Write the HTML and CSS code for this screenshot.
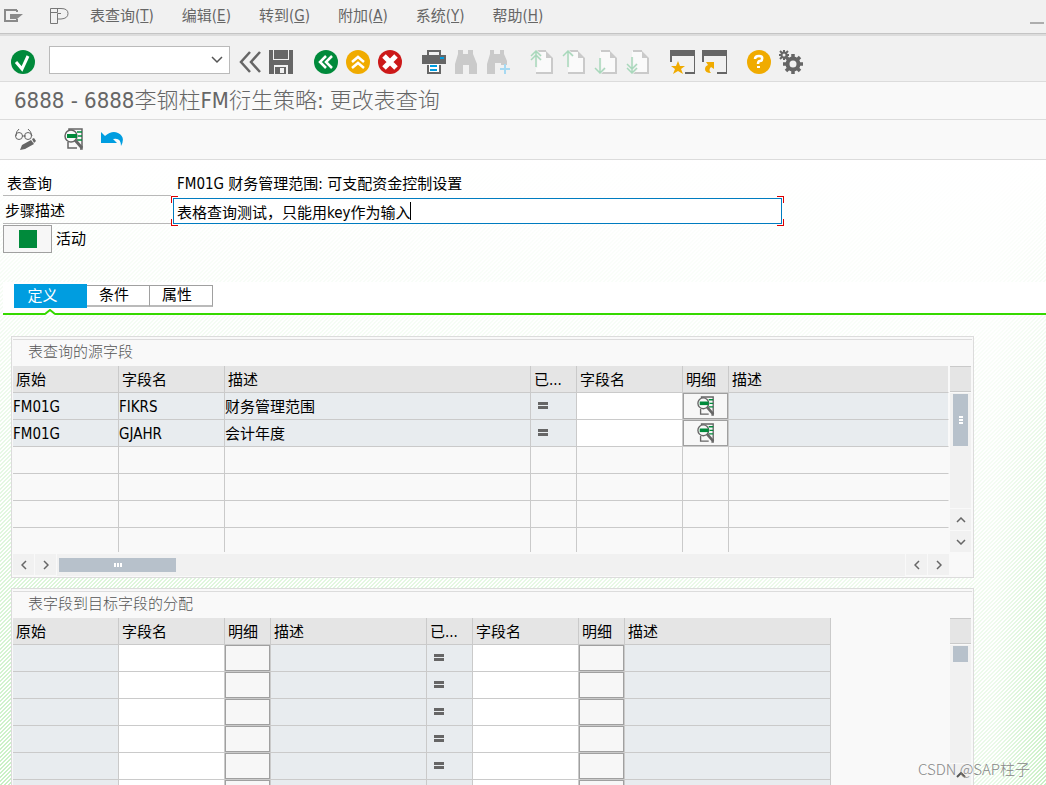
FILE: index.html
```html
<!DOCTYPE html>
<html lang="zh-CN">
<head>
<meta charset="utf-8">
<title>更改表查询</title>
<link rel="stylesheet" href="styles.css">
</head>
<body>
<svg class="sprite" aria-hidden="true">
  <symbol id="i-detail" viewBox="0 0 20 22">
    <path d="M5 2V1h13v20h-2M4 14v6h9" fill="none" stroke="#666" stroke-width="1.5"/>
    <path d="M13 4h5M14 8h4M13 12h5" stroke="#008a3b" stroke-width="1.5"/>
    <circle cx="7" cy="8" r="6" fill="#f9f9f9" stroke="#666" stroke-width="1.5"/>
    <path d="M3 6h10v4H3z" fill="#008a3b"/>
    <path d="M11 12l7 8" stroke="#666" stroke-width="3" fill="none"/>
  </symbol>
  <symbol id="i-doc" viewBox="0 0 24 24">
    <path d="M6 1h10l7 7v15H6z" fill="#fafafa"/>
    <path d="M7 1h9M22 8v15M6 23h17" stroke="#cacaca" stroke-width="2" fill="none"/>
    <path d="M16 1l7 7h-7z" fill="#cacaca"/>
  </symbol>
  <symbol id="i-win" viewBox="0 0 25 24">
    <path d="M0 0h25v24h-10v-2h9V6H2v6H0z" fill="#666"/>
  </symbol>
</svg>

<nav class="menubar">
  <button class="menu-icon" aria-label="菜单"><svg width="20" height="14" viewBox="0 0 20 14"><path d="M13 1H1v11h12M13 1v2M13 10v3" fill="none" stroke="#8a8a8a" stroke-width="2"/><path d="M6 5h13l-6 5H6z" fill="#8a8a8a"/></svg></button>
  <button class="menu-icon menu-p" aria-label="P"><svg width="20" height="18" viewBox="0 0 20 18"><path d="M.5 1.500H11q7 0 7 5t-7 5.500H7.500v4.500H.5zM7.500 1.500v4H.5M7.500 12V6.500H11" fill="none" stroke="#777"/></svg></button>
  <button>表查询(<u>T</u>)</button>
  <button>编辑(<u>E</u>)</button>
  <button>转到(<u>G</u>)</button>
  <button>附加(<u>A</u>)</button>
  <button>系统(<u>Y</u>)</button>
  <button>帮助(<u>H</u>)</button>
  <button class="minimize" aria-label="最小化"></button>
</nav>

<div class="toolbar">
  <button aria-label="回车"><svg width="24" height="24"><circle cx="12" cy="12" r="12" fill="#008a3b"/><path d="M5 12l6 7 6-13" fill="none" stroke="#fff" stroke-width="3"/></svg></button>
  <div class="command">
    <select aria-label="命令"><option></option></select>
    <svg width="12" height="8" viewBox="0 0 12 8"><path d="M1 1l5 5 5-5" fill="none" stroke="#555" stroke-width="1.5"/></svg>
  </div>
  <div class="group first">
    <button aria-label="收起"><svg width="24" height="24"><path d="M12 2L3 12l9 10M22 2l-9 10 9 10" fill="none" stroke="#666" stroke-width="2.5"/></svg></button>
    <button aria-label="保存"><svg width="24" height="24"><path d="M0 0h24v24H0z" fill="#666"/><path d="M4 0h1v9h14V0h1v10H4zM5 15h14v9H5z" fill="#f1f1f1"/><path d="M6 17h11v7H6z" fill="#666"/><path d="M11 18h4v5h-4z" fill="#f1f1f1"/></svg></button>
  </div>
  <div class="group">
    <button aria-label="返回"><svg width="24" height="24"><circle cx="12" cy="12" r="12" fill="#008a3b"/><path d="M12 6l-6 6 6 6M18 6l-6 6 6 6" fill="none" stroke="#fff" stroke-width="2.500"/></svg></button>
    <button aria-label="退出"><svg width="24" height="24"><circle cx="12" cy="12" r="12" fill="#f0ab00"/><path d="M6 12l6-5 6 5M6 18l6-5 6 5" fill="none" stroke="#fff" stroke-width="2.500"/></svg></button>
    <button aria-label="取消"><svg width="24" height="24"><circle cx="12" cy="12" r="12" fill="#cc1919"/><path d="M6 6l12 12M18 6L6 18" fill="none" stroke="#fff" stroke-width="5"/></svg></button>
  </div>
  <div class="group">
    <button aria-label="打印"><svg width="24" height="24"><path d="M5 5V0h14v5h5v9H0V5zM7 2v3h10V2zM5 15h14v9H5z" fill="#666" fill-rule="evenodd"/><path d="M7 14h10v8H7z" fill="#fff"/><path d="M8 15h7v2H8zM8 19h7v2H8zM18 7h4v2h-4z" fill="#009de0"/></svg></button>
    <button aria-label="查找"><svg width="24" height="24"><path d="M4 0h5v4h5V0h5v4l4 10v10h-8v-9H9v9H1V14L4 4z" fill="#cacaca"/></svg></button>
    <button aria-label="查找下一个"><svg width="24" height="24"><path d="M4 0h4v4h6V0h4v4l3 7v4h-6v-2H9v11H1V14L4 4z" fill="#cacaca"/><path d="M19 14v10M14 19h10" stroke="#a6d9f2" stroke-width="2"/></svg></button>
  </div>
  <div class="group">
    <button aria-label="首页"><svg width="24" height="24"><use href="#i-doc"/><path d="M6 1v17M1 6l5-5 5 5M1 10l5-5 5 5" fill="none" stroke="#f1f1f1" stroke-width="3"/><path d="M6 1v16M1 6l5-5 5 5M1 10l5-5 5 5" fill="none" stroke="#a8d8bb" stroke-width="1.500"/></svg></button>
    <button aria-label="上一页"><svg width="24" height="24"><use href="#i-doc"/><path d="M6 1v17M1 6l5-5 5 5" fill="none" stroke="#f1f1f1" stroke-width="3"/><path d="M6 1v16M1 6l5-5 5 5" fill="none" stroke="#a8d8bb" stroke-width="1.500"/></svg></button>
    <button aria-label="下一页"><svg width="24" height="24"><use href="#i-doc"/><path d="M6 8v15M1 18l5 5 5-5" fill="none" stroke="#f1f1f1" stroke-width="3"/><path d="M6 8v15M1 18l5 5 5-5" fill="none" stroke="#a8d8bb" stroke-width="1.500"/></svg></button>
    <button aria-label="末页"><svg width="24" height="24"><use href="#i-doc"/><path d="M6 7v16M1 18l5 5 5-5M1 14l5 5 5-5" fill="none" stroke="#f1f1f1" stroke-width="3"/><path d="M6 7v16M1 18l5 5 5-5M1 14l5 5 5-5" fill="none" stroke="#a8d8bb" stroke-width="1.500"/></svg></button>
  </div>
  <div class="group wins">
    <button aria-label="新建会话"><svg width="25" height="24"><use href="#i-win"/><path d="M8 11l2 5h5l-4 3 2 5-5-3-5 3 2-5-4-3h5z" fill="#f0ab00"/></svg></button>
    <button aria-label="快捷方式"><svg width="25" height="24"><use href="#i-win"/><path d="M4 12h8v7l-3-2q-3 3 0 6-6 0-6-4 0-3 3-4z" fill="#f0ab00"/></svg></button>
  </div>
  <div class="group">
    <button aria-label="帮助"><svg width="24" height="24"><circle cx="12" cy="12" r="12" fill="#f0ab00"/><path d="M8 9q0-3 4-3t3 3q0 2-2 2t-2 3" fill="none" stroke="#fff" stroke-width="2.500"/><path d="M10 16h3v2h-3z" fill="#fff"/></svg></button>
    <button aria-label="定制"><svg width="24" height="24"><circle cx="14" cy="14" r="5.500" fill="none" stroke="#666" stroke-width="4"/><path d="M14 4v5M14 19v5M4 14h5M19 14h5M7 7l3 3M18 18l3 3M7 21l3-3M18 10l3-3" stroke="#666" stroke-width="3.500"/><circle cx="5" cy="5" r="2.500" fill="none" stroke="#666" stroke-width="2"/><path d="M5 0v2M5 8v2M0 5h2M8 5h2M1 1l2 2M7 3l2-2M1 9l2-2" stroke="#666" stroke-width="2"/></svg></button>
  </div>
</div>

<h1 class="title">6888 - 6888李钢柱FM衍生策略: 更改表查询</h1>

<div class="appbar">
  <button aria-label="显示/更改"><svg width="24" height="22"><path d="M5 1Q2 3 2 8M14 1q3 2 4 7M8 8h4" fill="none" stroke="#666"/><circle cx="5" cy="8" r="3.500" fill="none" stroke="#666"/><circle cx="14" cy="8" r="3.500" fill="none" stroke="#666"/><path d="M6 22l2-5 9-5 3 4-9 5zM18 11l2-1 2 3-2 2z" fill="#666"/></svg></button>
  <button aria-label="明细"><svg width="20" height="22"><use href="#i-detail"/></svg></button>
  <button aria-label="撤销"><svg width="24" height="22"><path d="M1 4l4 4q7-6 13-3 8 4 3 13 0-9-8-7l4 4H1z" fill="#009de0"/></svg></button>
</div>

<main class="content">
  <div class="form">
    <span class="label plain">表查询</span>
    <span class="value">FM01G 财务管理范围: 可支配资金控制设置</span>
    <label class="label" for="step">步骤描述</label>
    <div class="focus"><input id="step" type="text" value="表格查询测试，只能用key作为输入"></div>
  </div>
  <div class="active-row">
    <button class="active-btn" aria-labelledby="act"><span></span></button>
    <span id="act">活动</span>
  </div>

  <div class="tabs" role="tablist">
    <button role="tab" aria-selected="true" class="tab selected">定义</button>
    <button role="tab" class="tab">条件</button>
    <button role="tab" class="tab">属性</button>
    <svg class="notch" width="10" height="6" viewBox="0 0 10 6"><path d="M0 6l5-5 5 5z" fill="#fff"/><path d="M0 5l5-4 5 4" fill="none" stroke="#36d900" stroke-width="2"/></svg>
  </div>

  <section class="box">
    <h2>表查询的源字段</h2>
    <div class="grid">
      <div class="sheet">
        <table class="fill">
          <colgroup><col class="m"><col class="m"><col class="l"><col class="s"><col class="m"><col class="s"><col></colgroup>
          <thead><tr><th>原始</th><th>字段名</th><th>描述</th><th>已...</th><th>字段名</th><th>明细</th><th>描述</th></tr></thead>
          <tbody>
            <tr class="data"><td>FM01G</td><td>FIKRS</td><td>财务管理范围</td><td><i class="eq"></i></td><td class="edit"><input aria-label="字段名"></td><td class="act"><button aria-label="明细"><svg width="18" height="20"><use href="#i-detail"/></svg></button></td><td></td></tr>
            <tr class="data"><td>FM01G</td><td>GJAHR</td><td>会计年度</td><td><i class="eq"></i></td><td class="edit"><input aria-label="字段名"></td><td class="act"><button aria-label="明细"><svg width="18" height="20"><use href="#i-detail"/></svg></button></td><td></td></tr>
            <tr><td></td><td></td><td></td><td></td><td></td><td></td><td></td></tr>
            <tr><td></td><td></td><td></td><td></td><td></td><td></td><td></td></tr>
            <tr><td></td><td></td><td></td><td></td><td></td><td></td><td></td></tr>
            <tr class="cut"><td></td><td></td><td></td><td></td><td></td><td></td><td></td></tr>
          </tbody>
        </table>
      </div>
      <div class="vscroll">
        <div class="corner"></div>
        <div class="track"><div class="thumb tall"><i></i><i></i><i></i></div></div>
        <button aria-label="向上"><svg width="10" height="6"><path d="M1 5l4-4 4 4" fill="none" stroke="#666" stroke-width="1.500"/></svg></button>
        <button aria-label="向下"><svg width="10" height="6"><path d="M1 1l4 4 4-4" fill="none" stroke="#666" stroke-width="1.500"/></svg></button>
      </div>
    </div>
    <div class="hscroll">
      <button aria-label="向左"><svg width="6" height="10"><path d="M5 1L1 5l4 4" fill="none" stroke="#666" stroke-width="1.500"/></svg></button>
      <button aria-label="向右"><svg width="6" height="10"><path d="M1 1l4 4-4 4" fill="none" stroke="#666" stroke-width="1.500"/></svg></button>
      <div class="htrack"><div class="hthumb"><i></i><i></i><i></i></div></div>
      <button aria-label="向左"><svg width="6" height="10"><path d="M5 1L1 5l4 4" fill="none" stroke="#666" stroke-width="1.500"/></svg></button>
      <button aria-label="向右"><svg width="6" height="10"><path d="M1 1l4 4-4 4" fill="none" stroke="#666" stroke-width="1.500"/></svg></button>
    </div>
  </section>

  <section class="box">
    <h2>表字段到目标字段的分配</h2>
    <div class="grid">
      <div class="sheet">
        <table class="fixed">
          <colgroup><col class="m"><col class="m"><col class="s"><col class="d"><col class="s"><col class="m"><col class="s"><col class="x"></colgroup>
          <thead><tr><th>原始</th><th>字段名</th><th>明细</th><th>描述</th><th>已...</th><th>字段名</th><th>明细</th><th>描述</th></tr></thead>
          <tbody>
            <tr class="data"><td></td><td class="edit"><input aria-label="字段名"></td><td class="act"><button aria-label="明细"></button></td><td></td><td><i class="eq"></i></td><td class="edit"><input aria-label="字段名"></td><td class="act"><button aria-label="明细"></button></td><td></td></tr>
            <tr class="data"><td></td><td class="edit"><input aria-label="字段名"></td><td class="act"><button aria-label="明细"></button></td><td></td><td><i class="eq"></i></td><td class="edit"><input aria-label="字段名"></td><td class="act"><button aria-label="明细"></button></td><td></td></tr>
            <tr class="data"><td></td><td class="edit"><input aria-label="字段名"></td><td class="act"><button aria-label="明细"></button></td><td></td><td><i class="eq"></i></td><td class="edit"><input aria-label="字段名"></td><td class="act"><button aria-label="明细"></button></td><td></td></tr>
            <tr class="data"><td></td><td class="edit"><input aria-label="字段名"></td><td class="act"><button aria-label="明细"></button></td><td></td><td><i class="eq"></i></td><td class="edit"><input aria-label="字段名"></td><td class="act"><button aria-label="明细"></button></td><td></td></tr>
            <tr class="data"><td></td><td class="edit"><input aria-label="字段名"></td><td class="act"><button aria-label="明细"></button></td><td></td><td><i class="eq"></i></td><td class="edit"><input aria-label="字段名"></td><td class="act"><button aria-label="明细"></button></td><td></td></tr>
            <tr class="data"><td></td><td class="edit"><input aria-label="字段名"></td><td class="act"><button aria-label="明细"></button></td><td></td><td><i class="eq"></i></td><td class="edit"><input aria-label="字段名"></td><td class="act"><button aria-label="明细"></button></td><td></td></tr>
          </tbody>
        </table>
      </div>
      <div class="vscroll">
        <div class="corner"></div>
        <div class="track"><div class="thumb"></div></div>
        <button aria-label="向上"><svg width="10" height="6"><path d="M1 5l4-4 4 4" fill="none" stroke="#555" stroke-width="2"/></svg></button>
        <button aria-label="向下"><svg width="10" height="6"><path d="M1 1l4 4 4-4" fill="none" stroke="#555" stroke-width="2"/></svg></button>
      </div>
    </div>
  </section>
</main>
<div class="watermark">CSDN @SAP柱子</div>
</body>
</html>
```

FILE: styles.css
```css
* { box-sizing: border-box; }

body {
  margin: 0;
  height: 100vh;
  overflow: hidden;
  display: flex;
  flex-direction: column;
  position: relative;
  background: #fff;
  color: #000;
  font: 15px/20px "DejaVu Sans Condensed", "Noto Sans CJK SC", sans-serif;
}

button, input, select {
  font: inherit;
  color: inherit;
  margin: 0;
  padding: 0;
  border: 0;
  border-radius: 0;
  background: none;
}

svg { display: block; }
.sprite { position: absolute; width: 0; height: 0; }

/* Menu bar */
.menubar {
  flex: none;
  display: flex;
  align-items: center;
  gap: 28px;
  height: 36px;
  padding: 0 2px 2px 4px;
  background: #f1f1f1;
  border-bottom: 2px solid #dcdcdc;
  box-shadow: inset 0 -1px #c4c4c4;
  color: #666;
}
.menu-p { margin: 0 -8px 0 -2px; }
.minimize {
  width: 14px;
  height: 2px;
  margin: 14px 0 0 auto;
  background: #adadad;
}

/* System toolbar */
.toolbar {
  flex: none;
  display: flex;
  align-items: center;
  gap: 20px;
  height: 46px;
  padding: 6px 11px 0;
  background: #f1f1f1;
  border-bottom: 1px solid #dcdcdc;
}
.group { display: flex; gap: 8px; }
.first { gap: 7px; margin-right: 1px; }
.wins { gap: 7px; }
.command { position: relative; width: 181px; margin: -4px -12px 0 -6px; }
.command select {
  display: block;
  appearance: none;
  width: 100%;
  height: 28px;
  background: #fff;
  border: 1px solid #bababa;
}
.command svg { position: absolute; right: 7px; top: 10px; pointer-events: none; }

.title {
  flex: none;
  margin: 0;
  height: 38px;
  padding-left: 14px;
  font-size: 22px;
  line-height: 38px;
  font-weight: 300;
  color: #666;
  background: #f9f9f9;
  border-bottom: 1px solid #dcdcdc;
}

.appbar {
  flex: none;
  display: flex;
  align-items: center;
  gap: 16px;
  height: 40px;
  padding: 0 14px 2px;
  background: #f9f9f9;
  border-bottom: 1px solid #dcdcdc;
}
.appbar button:nth-child(2) { margin-left: 10px; }

/* Screen area with a fading hatch */
.content {
  flex: 1;
  min-height: 0;
  overflow: hidden;
  padding-top: 10px;
  background:
    linear-gradient(90deg, transparent, rgba(255,255,255,.6) 95%, transparent),
    linear-gradient(180deg, #fff, rgba(255,255,255,.8) 25%, transparent),
    linear-gradient(135deg, #c8f0c4 25%, #fff 25% 50%, #c8f0c4 50% 75%, #fff 75%) 0 0 / 4px 4px;
}

.form {
  display: grid;
  grid-template-columns: 168px 1fr;
  margin: 0 262px 0 3px;
}
.label { height: 28px; padding: 3px 2px; border-bottom: 1px solid #b8b8b8; line-height: 24px; }
.plain { height: 26px; padding: 2px 4px; }
.value { padding: 2px 6px 0; line-height: 24px; }
.focus {
  height: 30px;
  margin-bottom: -2px;
  padding: 2px;
  background:
    linear-gradient(#d00 0 0) 0 0 / 7px 1px,
    linear-gradient(#d00 0 0) 0 0 / 1px 7px,
    linear-gradient(#d00 0 0) 100% 0 / 7px 1px,
    linear-gradient(#d00 0 0) 100% 0 / 1px 7px,
    linear-gradient(#d00 0 0) 0 100% / 7px 1px,
    linear-gradient(#d00 0 0) 0 100% / 1px 7px,
    linear-gradient(#d00 0 0) 100% 100% / 7px 1px,
    linear-gradient(#d00 0 0) 100% 100% / 1px 7px;
  background-repeat: no-repeat;
}
.focus input {
  display: block;
  width: 100%;
  height: 26px;
  padding: 0 3px;
  background: linear-gradient(#000 0 0) 236px center / 1px 18px no-repeat #fff;
  border: 1px solid #007cc0;
  outline: 0;
}

.active-row { display: flex; align-items: center; gap: 4px; margin: 1px 0 0 3px; }
.active-btn {
  display: flex;
  justify-content: center;
  align-items: center;
  width: 49px;
  height: 28px;
  background: #f7f7f7;
  border: 1px solid #a0a0a0;
}
.active-btn span { width: 18px; height: 18px; background: #008a3b; }

.tabs {
  position: relative;
  display: flex;
  align-items: center;
  height: 33px;
  margin: 29px 0 0 3px;
  padding: 0 11px 3px;
  background: #fff;
  border-bottom: 2px solid #36d900;
}
.tab {
  width: 63px;
  height: 22px;
  padding-right: 8px;
  line-height: 19px;
  background: #fff;
  border: 1px solid #a0a0a0;
  border-left: 0;
  border-bottom: 2px solid #bababa;
}
.tab.selected {
  width: 73px;
  height: 24px;
  padding-right: 16px;
  line-height: 24px;
  color: #fff;
  background: #009de0;
  border: 0;
}
.notch { position: absolute; left: 42px; bottom: -2px; }

/* Group boxes */
.box {
  margin: 21px 72px 10px 11px;
  padding: 2px 1px 1px;
  background: #f9f9f9;
  border: 1px solid #dcdcdc;
}
.box + .box { margin-top: 0; }
.box h2 {
  margin: 0;
  padding: 0 15px;
  height: 27px;
  border-top: 1px solid #dcdcdc;
  font-size: 15px;
  font-weight: 300;
  line-height: 24px;
  color: #555;
}
.grid { display: flex; justify-content: space-between; gap: 1px; }
.sheet { flex: 1; }

table { table-layout: fixed; border-collapse: separate; border-spacing: 0; }
.fill { width: 100%; }
.fixed { width: 818px; }
.m { width: 106px; }
.l { width: 306px; }
.s { width: 46px; }
.d { width: 156px; }
.x { width: 206px; }
th, td {
  height: 27px;
  padding: 2px 0 0;
  text-align: left;
  font-weight: 400;
  white-space: nowrap;
  border-right: 1px solid #cacaca;
  border-bottom: 1px solid #cacaca;
}
th { padding-left: 3px; background: #e5e5e5; }
.fill th:last-child, .fill td:last-child { border-right-color: #f9f9f9; }
.data td { background: #e8ecef; }
.data .edit { background: #fff; }
.edit, .act { padding: 0; }
.cut td { height: 24px; border-bottom: 0; }
td input, td button { display: block; width: 100%; height: 26px; }
td button {
  background: #f7f7f7;
  border: 1px solid #a0a0a0;
}
td button svg { margin: 0 auto; }
.eq {
  display: block;
  width: 10px;
  height: 7px;
  margin: 0 0 4px 7px;
  border: solid #666;
  border-width: 3px 0;
}

/* Scroll bars */
.vscroll { display: flex; flex-direction: column; gap: 1px; width: 21px; margin-right: 1px; }
.corner {
  height: 26px;
  background: #e5e5e5;
  border: solid #cacaca;
  border-width: 1px 0;
}
.track { flex: 1; padding: 1px 3px; background: #f1f1f1; }
.thumb { height: 16px; background: #b7c1cb; }
.tall {
  display: flex;
  flex-direction: column;
  align-items: center;
  justify-content: center;
  gap: 1px;
  height: 52px;
}
.tall i { width: 4px; height: 2px; background: #fff; }
.vscroll button, .hscroll button {
  display: flex;
  flex: none;
  align-items: center;
  justify-content: center;
  width: 21px;
  height: 21px;
  background: #f1f1f1;
}
.hscroll { display: flex; gap: 1px; margin: 2px 23px 0 0; }
.htrack { flex: 1; padding: 4px 2px; background: #f1f1f1; }
.hthumb {
  display: flex;
  align-items: center;
  justify-content: center;
  gap: 1px;
  width: 117px;
  height: 14px;
  background: #b7c1cb;
}
.hthumb i { width: 2px; height: 4px; background: #fff; }

.watermark {
  position: absolute;
  right: 16px;
  bottom: 6px;
  font-family: "Noto Sans CJK SC", sans-serif;
  font-weight: 300;
  color: #888;
}
```
